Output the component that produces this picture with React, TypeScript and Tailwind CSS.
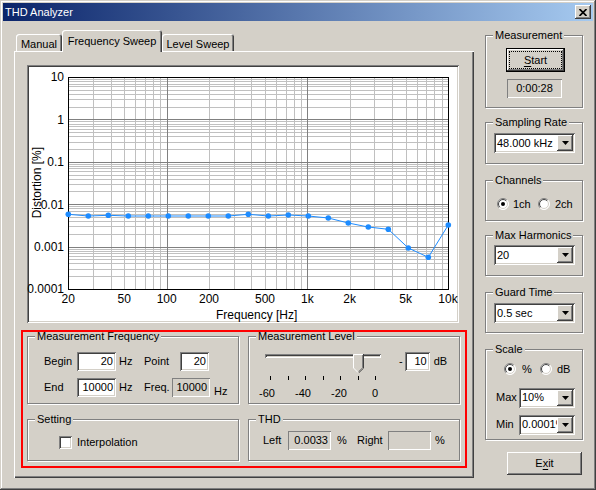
import type { ReactNode } from "react";

const raised =
  "shadow-[inset_-1px_-1px_#404040,inset_1px_1px_#fff,inset_-2px_-2px_#808080,inset_2px_2px_#D4D0C8]";
const sunken =
  "shadow-[inset_1px_1px_#808080,inset_-1px_-1px_#fff,inset_2px_2px_#404040,inset_-2px_-2px_#D4D0C8]";
const thin = "shadow-[inset_1px_1px_#808080,inset_-1px_-1px_#fff]";

const points = [
  147.3, 149, 148.3, 149, 149, 149, 149, 149, 149, 147.3, 149, 148, 149, 151,
  156, 160, 162.3, 181, 190.3, 158,
];

export default function App() {
  return (
    <div className="w-[596px] h-[490px] bg-[#D4D0C8] p-[3px] flex flex-col text-[11px] text-black font-['Liberation_Sans',Arial,sans-serif] shadow-[inset_-1px_-1px_#404040,inset_1px_1px_#D4D0C8,inset_-2px_-2px_#808080,inset_2px_2px_#fff]">
      <TitleBar />
      <div className="flex pt-[9px] pl-[11px]">
        <div className="w-[460px] flex flex-col">
          <div className="h-[21px] flex items-end pl-[2px]">
            <Tab label="Manual" className="w-[46px]" />
            <Tab label="Frequency Sweep" className="w-[100px]" selected />
            <Tab label="Level Sweep" className="w-[72px]" />
          </div>
          <div className="h-[427px] pt-[14px] pl-[7px] shadow-[inset_1px_1px_#fff,inset_-1px_-1px_#404040,inset_-2px_-2px_#808080]">
            <div className={`ml-[6px] w-[432px] h-[258px] bg-white p-[2px] ${sunken}`}>
              <Chart />
            </div>
            <div className="mt-[7px] w-[446px] h-[138px] border-2 border-[#f00] pl-[4px] flex gap-[9px]">
              <div className="w-[212px] flex flex-col">
                <FrequencyGroup />
                <Group title="Setting" className="mt-[11px] h-[46px]">
                  <div className="mt-[11px] pl-[31px] flex items-center">
                    <div className={`w-[13px] h-[13px] bg-white ${sunken}`} />
                    <span className="ml-[5px]">Interpolation</span>
                  </div>
                </Group>
              </div>
              <div className="w-[212px] flex flex-col">
                <LevelGroup />
                <Group title="THD" className="mt-[11px] h-[46px]">
                  <div className="mt-[8px] pl-[14px] h-[19px] flex items-center">
                    <span className="w-[25px]">Left</span>
                    <div className={`w-[43px] h-[19px] flex items-center justify-end pr-[3px] ${thin}`}>
                      0.0033
                    </div>
                    <span className="ml-[6px] w-[20px]">%</span>
                    <span className="w-[31px]">Right</span>
                    <div className={`w-[43px] h-[19px] ${thin}`} />
                    <span className="ml-[4px]">%</span>
                  </div>
                </Group>
              </div>
            </div>
          </div>
        </div>
        <RightColumn />
      </div>
    </div>
  );
}

function TitleBar() {
  return (
    <div className="h-[18px] flex items-center justify-between bg-[linear-gradient(to_right,#0A246A,#A6CAF0)]">
      <span className="pl-[2px] text-white leading-[18px]">THD Analyzer</span>
      <div className={`mr-[2px] w-[16px] h-[14px] bg-[#D4D0C8] flex items-center justify-center ${raised}`}>
        <svg width="8" height="7" viewBox="0 0 8 7">
          <path d="M0.5 0 L7.5 7 M7.5 0 L0.5 7" stroke="#000" strokeWidth="1.7" />
        </svg>
      </div>
    </div>
  );
}

function Tab({ label, className, selected }: { label: string; className: string; selected?: boolean }) {
  return (
    <div
      className={`relative flex justify-center rounded-t-[3px] bg-[#D4D0C8] whitespace-nowrap shadow-[inset_1px_1px_#fff,inset_-1px_0_#404040,inset_-2px_0_#808080] ${
        selected ? "h-[22px] -mb-px z-10 pt-[3px]" : "h-[17px] pt-[2px]"
      } ${className}`}
    >
      {label}
    </div>
  );
}

function Group({ title, className, children }: { title: string; className?: string; children?: ReactNode }) {
  return (
    <fieldset
      className={`min-w-0 border border-[#808080] shadow-[1px_1px_0_#fff,inset_1px_1px_0_#fff] ${className ?? ""}`}
    >
      <legend className="ml-[7px] px-[2px] leading-[8px] bg-[#D4D0C8] whitespace-nowrap">{title}</legend>
      {children}
    </fieldset>
  );
}

function Field({ value, className }: { value: string; className: string }) {
  return (
    <div className={`h-[19px] bg-white flex items-center justify-end pr-[3px] ${sunken} ${className}`}>{value}</div>
  );
}

function FrequencyGroup() {
  return (
    <Group title="Measurement Frequency" className="h-[72px]">
      <div className="mt-[12px] pl-[16px] h-[19px] flex items-center">
        <span className="w-[33px]">Begin</span>
        <Field value="20" className="w-[39px]" />
        <span className="ml-[3px] w-[25px]">Hz</span>
        <span className="w-[36px]">Point</span>
        <Field value="20" className="w-[29px]" />
      </div>
      <div className="mt-[7px] pl-[16px] h-[19px] flex items-center">
        <span className="w-[33px]">End</span>
        <Field value="10000" className="w-[39px]" />
        <span className="ml-[3px] w-[25px]">Hz</span>
        <span className="w-[28px]">Freq.</span>
        <div className={`w-[38px] h-[19px] flex items-center justify-end pr-[3px] ${thin}`}>10000</div>
        <span className="ml-[4px] mt-[8px]">Hz</span>
      </div>
    </Group>
  );
}

function LevelGroup() {
  return (
    <Group title="Measurement Level" className="h-[72px]">
      <div className="flex items-start">
        <div className="ml-[16px] mt-[8px] w-[116px]">
          <div className="relative h-[19px]">
            <div className={`mt-[6px] h-[4px] ${sunken}`} />
            <svg className="absolute left-[88px] top-0" width="11" height="19" viewBox="0 0 11 19">
              <path d="M0 0 H11 V14 L5.5 19 L0 14 Z" fill="#D4D0C8" />
              <path d="M0.5 14 V0.5 H10" stroke="#fff" fill="none" />
              <path d="M10.5 0 V14.2 L5.5 19" stroke="#404040" fill="none" />
              <path d="M9.5 1 V13.8 L5.5 17.6" stroke="#808080" fill="none" />
              <path d="M0.5 14 L5 18.5" stroke="#fff" fill="none" />
            </svg>
          </div>
          <div className="mt-[3px] ml-[5px] w-[106px] flex justify-between">
            {Array.from({ length: 7 }).map((_, i) => (
              <div key={i} className="w-px h-[4px] bg-black" />
            ))}
          </div>
          <div className="mt-[7px] ml-[2px] w-[108px] flex justify-between leading-[12px]">
            {["-60", "-40", "-20", "0"].map((l) => (
              <div key={l} className="w-0 flex justify-center whitespace-nowrap">
                {l}
              </div>
            ))}
          </div>
        </div>
        <div className="ml-[18px] mt-[12px] h-[19px] flex items-center">
          <span>-</span>
          <Field value="10" className="ml-[2px] w-[25px]" />
          <span className="ml-[4px]">dB</span>
        </div>
      </div>
    </Group>
  );
}

function Combo({ value, className }: { value: string; className: string }) {
  return (
    <div className={`h-[20px] bg-white flex items-center p-[2px] ${sunken} ${className}`}>
      <span className="flex-1 min-w-0 pl-[1px] overflow-hidden whitespace-nowrap">{value}</span>
      <div className={`w-[16px] shrink-0 h-full bg-[#D4D0C8] flex items-center justify-center ${raised}`}>
        <svg width="7" height="4" viewBox="0 0 7 4">
          <path d="M0 0 H7 L3.5 4 Z" fill="#000" />
        </svg>
      </div>
    </div>
  );
}

function Radio({ checked }: { checked?: boolean }) {
  const r1 = 5.5;
  const r2 = 4.5;
  const c = 6;
  const d1 = r1 * Math.SQRT1_2;
  const d2 = r2 * Math.SQRT1_2;
  return (
    <svg width="12" height="12" viewBox="0 0 12 12" className="shrink-0">
      <circle cx={c} cy={c} r={r1} fill="#fff" />
      <path d={`M${c - d1} ${c + d1} A${r1} ${r1} 0 0 1 ${c + d1} ${c - d1}`} stroke="#808080" fill="none" />
      <path d={`M${c + d1} ${c - d1} A${r1} ${r1} 0 0 1 ${c - d1} ${c + d1}`} stroke="#fff" fill="none" />
      <path d={`M${c - d2} ${c + d2} A${r2} ${r2} 0 0 1 ${c + d2} ${c - d2}`} stroke="#404040" fill="none" />
      <path d={`M${c + d2} ${c - d2} A${r2} ${r2} 0 0 1 ${c - d2} ${c + d2}`} stroke="#D4D0C8" fill="none" />
      {checked && <circle cx={c} cy={c} r={2} fill="#000" />}
    </svg>
  );
}

function RightColumn() {
  return (
    <div className="ml-[11px] w-[98px] flex flex-col">
      <Group title="Measurement" className="mt-[1px] h-[77px]">
        <div className="mt-[9px] ml-[20px] w-[59px] h-[24px] border border-black">
          <div className={`relative w-full h-full flex items-center justify-center ${raised}`}>
            <div className="absolute inset-[2px] border border-dotted border-black" />
            <span>
              <span className="underline underline-offset-[2px]">S</span>tart
            </span>
          </div>
        </div>
        <div className={`mt-[7px] ml-[21px] w-[55px] h-[19px] flex items-center justify-center ${thin}`}>
          0:00:28
        </div>
      </Group>
      <Group title="Sampling Rate" className="mt-[10px] h-[46px]">
        <Combo value="48.000 kHz" className="mt-[7px] ml-[8px] w-[81px]" />
      </Group>
      <Group title="Channels" className="mt-[12px] h-[45px]">
        <div className="mt-[12px] pl-[11px] flex items-center">
          <Radio checked />
          <span className="ml-[4px] w-[25px]">1ch</span>
          <Radio />
          <span className="ml-[5px]">2ch</span>
        </div>
      </Group>
      <Group title="Max Harmonics" className="mt-[10px] h-[45px]">
        <Combo value="20" className="mt-[6px] ml-[8px] w-[81px]" />
      </Group>
      <Group title="Guard Time" className="mt-[12px] h-[45px]">
        <Combo value="0.5 sec" className="mt-[7px] ml-[8px] w-[81px]" />
      </Group>
      <Group title="Scale" className="mt-[12px] h-[95px]">
        <div className="mt-[8px] pl-[18px] flex items-center">
          <Radio checked />
          <span className="ml-[6px] w-[18px]">%</span>
          <Radio />
          <span className="ml-[5px]">dB</span>
        </div>
        <div className="mt-[10px] pl-[10px] flex items-center">
          <span className="w-[23px]">Max</span>
          <Combo value="10%" className="w-[56px]" />
        </div>
        <div className="mt-[7px] pl-[10px] flex items-center">
          <span className="w-[23px]">Min</span>
          <Combo value="0.0001%" className="w-[56px]" />
        </div>
      </Group>
      <div className={`mt-[12px] ml-[22px] w-[75px] h-[23px] flex items-center justify-center ${raised}`}>
        <span>
          E<span className="underline underline-offset-[2px]">x</span>it
        </span>
      </div>
    </div>
  );
}

function Chart() {
  const l20 = Math.log10(20);
  const fx = (f: number) => 39.3 + (Math.log10(f) - l20) * 140.7;
  const vy = (v: number) => 10 + (1 - Math.log10(v)) * 42.4;
  const px = (n: number) => Math.round(n) + 0.5;

  const minorF: number[] = [];
  for (const d of [10, 100, 1000]) {
    for (let m = d === 10 ? 3 : 2; m <= 9; m++) minorF.push(m * d);
  }
  const majorF = [100, 1000];
  const minorV: number[] = [];
  for (let e = -4; e <= 0; e++) {
    for (let m = 2; m <= 9; m++) minorV.push(m * Math.pow(10, e));
  }
  const majorV = [1, 0.1, 0.01, 0.001];

  const left = px(fx(20));
  const right = px(fx(10000));
  const top = px(vy(10));
  const bottom = px(vy(0.0001));

  const yLabels: [string, number][] = [
    ["10", 10],
    ["1", 1],
    ["0.1", 0.1],
    ["0.01", 0.01],
    ["0.001", 0.001],
    ["0.0001", 0.0001],
  ];
  const xLabels: [string, number][] = [
    ["20", 20],
    ["50", 50],
    ["100", 100],
    ["200", 200],
    ["500", 500],
    ["1k", 1000],
    ["2k", 2000],
    ["5k", 5000],
    ["10k", 10000],
  ];
  const pts = points.map((y, i) => [39.3 + i * 20, y] as const);

  return (
    <svg
      width="428"
      height="254"
      viewBox="0 0 428 254"
      className="block overflow-visible font-['Liberation_Sans',Arial,sans-serif]"
    >
      <g shapeRendering="crispEdges">
        {minorF.map((f) => (
          <line key={`f${f}`} x1={px(fx(f))} x2={px(fx(f))} y1={top} y2={bottom} stroke="#C0C0C0" />
        ))}
        {minorV.map((v) => (
          <line key={`v${v}`} x1={left} x2={right} y1={px(vy(v))} y2={px(vy(v))} stroke="#C0C0C0" />
        ))}
        {majorF.map((f) => (
          <line key={`F${f}`} x1={px(fx(f))} x2={px(fx(f))} y1={top} y2={bottom} stroke="#808080" />
        ))}
        {majorV.map((v) => (
          <line key={`V${v}`} x1={left} x2={right} y1={px(vy(v))} y2={px(vy(v))} stroke="#808080" />
        ))}
        <rect x={left} y={top} width={right - left} height={bottom - top} fill="none" stroke="#000" />
      </g>
      <g fontSize="12" fill="#000">
        {yLabels.map(([t, v]) => (
          <text key={t} x={35} y={vy(v) + 4.3} textAnchor="end">
            {t}
          </text>
        ))}
        {xLabels.map(([t, f]) => (
          <text key={t} x={fx(f)} y={236} textAnchor="middle">
            {t}
          </text>
        ))}
        <text x={227.7} y={252} textAnchor="middle">
          Frequency [Hz]
        </text>
        <text transform="translate(12,115.7) rotate(-90)" textAnchor="middle">
          Distortion [%]
        </text>
      </g>
      <polyline points={pts.map((p) => p.join(",")).join(" ")} fill="none" stroke="#1E8CFF" strokeWidth="1" />
      {pts.map(([x, y], i) => (
        <circle key={i} cx={x} cy={y} r={2.8} fill="#1E8CFF" />
      ))}
    </svg>
  );
}
